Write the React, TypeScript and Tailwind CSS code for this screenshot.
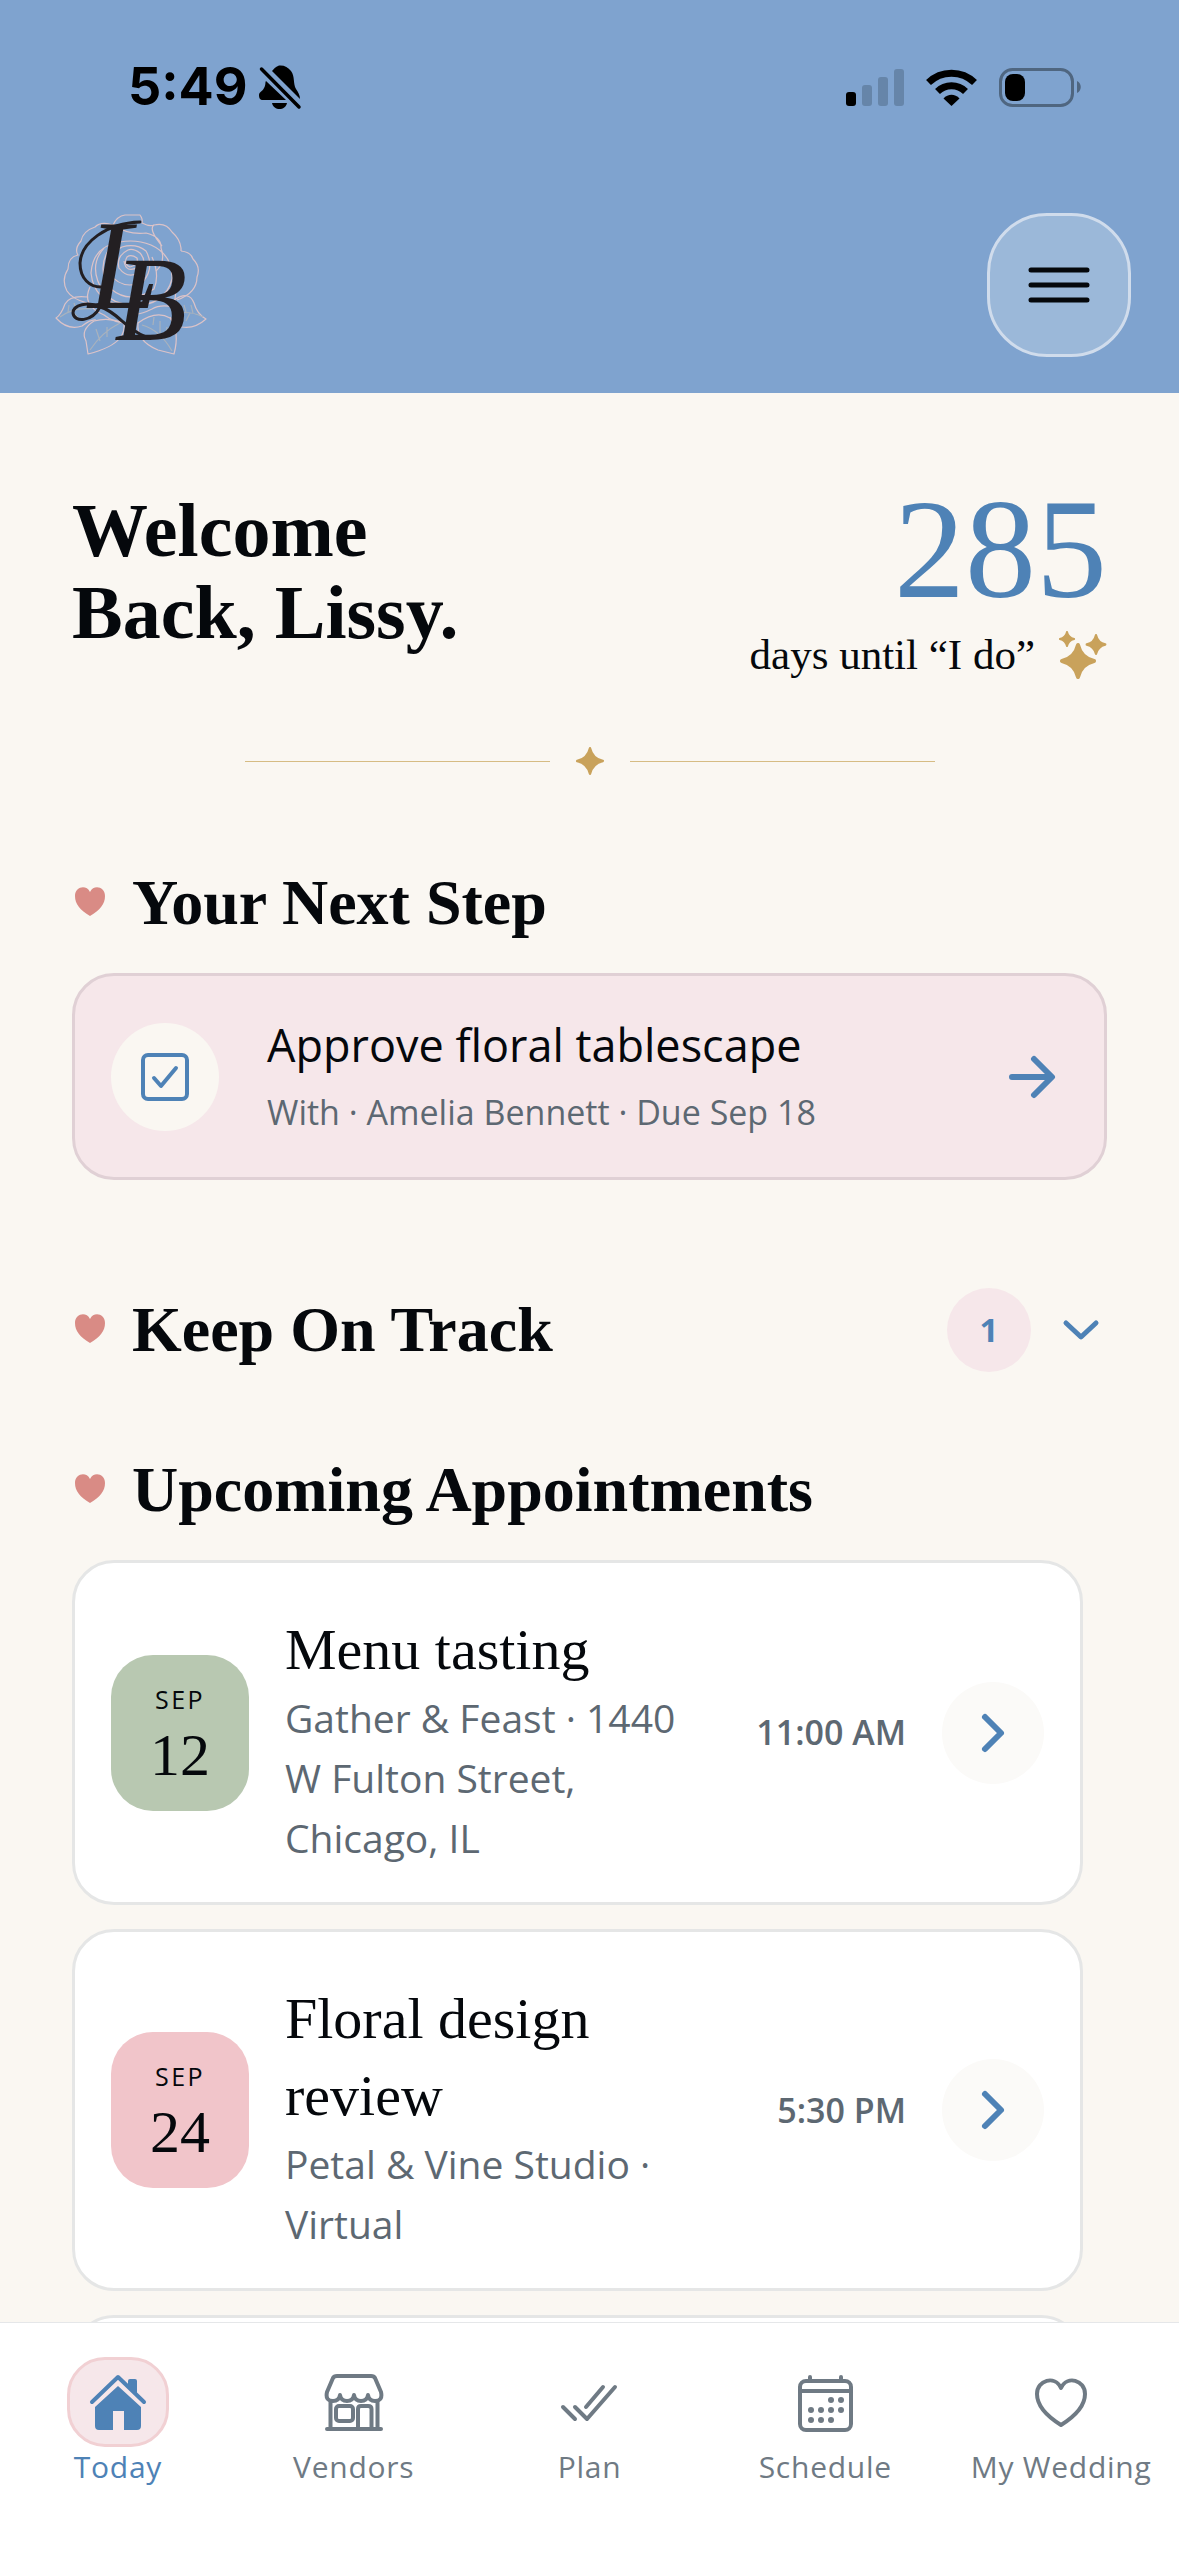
import React from 'react';

interface Appointment {
  month: string;
  day: number;
  title: string;
  place: string;
  time: string;
  tile: string;
}

const appointments: Appointment[] = [
  {
    month: 'SEP',
    day: 12,
    title: 'Menu tasting',
    place: 'Gather & Feast · 1440 W Fulton Street, Chicago, IL',
    time: '11:00 AM',
    tile: 'bg-[#b8c8b1]',
  },
  {
    month: 'SEP',
    day: 24,
    title: 'Floral design review',
    place: 'Petal & Vine Studio · Virtual',
    time: '5:30 PM',
    tile: 'bg-[#f1c5ca]',
  },
];

const StatusBar: React.FC = () => (
  <div className="flex h-[174px] items-center justify-between pl-32 pr-[98px]">
    <div className="flex items-center gap-2.5 text-black">
      <span className="font-['Inter',sans-serif] text-[52px] font-bold leading-none">5:49</span>
      <svg className="h-[46px] w-[44px]" viewBox="0 0 44 46" fill="currentColor" aria-label="Silent mode">
        <path d="M14 7 C16 5 17 3 21 1.500 C26 1 30 3 33 7 C37 12 35 20 38 25 C40 28 42 31 42 35 Z" />
        <path d="M8 17 L28 36 H5 C2 36 1 34 1 31 C1 28 5 27 6 24 C8 21 7 18 8 17 Z" />
        <path d="M14 39 H29 C28 43 25 45 21.500 45 C18 45 15 43 14 39 Z" />
        <path d="M3.500 5 L41 43" stroke="currentColor" strokeWidth="3.500" strokeLinecap="round" />
      </svg>
    </div>
    <div className="flex items-center gap-[22px]">
      <svg className="h-[37px] w-[58px]" viewBox="0 0 58 37" aria-label="Cellular signal">
        <rect x="0" y="23" width="10" height="14" rx="3" fill="#000" />
        <rect x="16" y="16" width="10" height="21" rx="3" fill="#6685a9" />
        <rect x="32" y="8" width="10" height="29" rx="3" fill="#6685a9" />
        <rect x="48" y="0" width="10" height="37" rx="3" fill="#6685a9" />
      </svg>
      <svg className="h-[37px] w-[51px]" viewBox="0 0 51 37" aria-label="Wi-Fi">
        <path d="M2.500 13.500 A33 33 0 0 1 48.500 13.500" fill="none" stroke="#000" strokeWidth="7" />
        <path d="M11.500 22.500 A20 20 0 0 1 39.500 22.500" fill="none" stroke="#000" strokeWidth="7" />
        <path d="M17.500 29.500 C22 24.500 29 24.500 33.500 29.500 L25.500 37 Z" fill="#000" />
      </svg>
      <svg className="h-[39px] w-[82px]" viewBox="0 0 82 39" aria-label="Battery">
        <rect x="1.500" y="1.500" width="72" height="36" rx="12" fill="none" stroke="#4f6680" strokeWidth="3" />
        <rect x="6" y="6" width="20" height="27" rx="8" fill="#000" />
        <path d="M78 13 C83 15 83 23 78 25 Z" fill="#4f6680" />
      </svg>
    </div>
  </div>
);

// Rose line art with the couple's initials over it
const Monogram: React.FC = () => (
  <svg className="h-[144px] w-[156px]" viewBox="0 0 156 144" role="img" aria-label="LB">
    <g fill="none" stroke="#dcc3c8" strokeWidth="1.200" strokeLinejoin="round">
      <path d="M59 12 Q63 3 71 2 L86 2 Q89 6 88 10 Q96 14 100 12 Q112 9 118 19 Q126 26 127 35 L127 38" />
      <path d="M59 12 Q47 8 41 14 Q29 18 27 28 Q20 36 24 42 Q14 44 14 56 Q7 67 13 78 Q18 86 33 90" />
      <path d="M127 38 Q137 39 139 46 Q147 54 143 64 Q143 80 123 87" />
      <path d="M59 12 Q74 22 92 20 Q108 24 107 35 Q112 49 102 58 M100 12 Q94 16 108 33" />
      <path d="M66 29 Q39 33 37 60 Q40 88 68 92 Q110 97 118 66 Q119 42 97 32 Q82 26 66 29 Z" />
      <path d="M50 35 Q33 54 50 80 Q68 100 102 84 M59 30 Q40 55 57 76 Q76 92 100 76 Q106 62 98 44" />
      <path d="M68 34 Q50 44 55 60 Q68 78 89 69 Q101 54 92 38 Q82 30 68 34 Z" />
      <path d="M74 37 Q62 43 65 55 Q74 67 86 59 Q94 49 86 40 Q79 35 74 37 Z" />
      <path d="M73 44 Q69 51 76 54 Q85 52 83 45 Q77 41 73 44 Z M70 48 Q72 61 84 54" />
      <path d="M36 74 Q27 92 50 102 Q61 111 78 110 M123 70 L120 94 Q106 91 98 96 Q88 101 82 101" />
      <path d="M33 84 Q16 82 11 91 Q7 102 2 105 Q14 118 28 113 Q37 106 42 107" />
      <path d="M120 87 Q135 77 140 90 Q143 101 152 106 Q141 116 128 114 Q121 112 116 104" />
      <path d="M40 108 Q26 117 32 128 L34 141 Q58 135 66 125 Q71 119 70 110 Q55 104 40 108 Z" />
      <path d="M84 110 Q82 128 104 137 L120 141 Q126 119 116 105 Q102 97 84 110 Z" />
      <path d="M36 137 Q48 119 66 110 M42 116 L46 128 M53 114 L53 124 M88 112 Q106 117 118 138 M99 112 L100 104 M106 120 L106 108 M112 126 L113 114" stroke="#a9b2bd" />
      <path d="M6 104 Q20 94 38 96 M14 99 L15 92 M22 96 L20 90 M18 98 L25 106 M149 104 Q138 98 122 100 M139 100 L137 92 M132 99 L130 92 M136 100 L132 108" stroke="#a9b2bd" />
    </g>
    <g fill="none" stroke="#231f22" strokeWidth="3" strokeLinecap="round">
      <path d="M86 9 C52 10 27 30 26 50 C26 66 36 74 47 74" />
      <path d="M46 94 C34 88 19 92 19 100 C20 110 38 109 46 94 C62 98 72 116 92 124" />
    </g>
    <g fill="#231f22" fontFamily="'Liberation Serif', serif" fontStyle="italic">
      <text x="34" y="95" fontSize="128">L</text>
      <text x="60" y="127" fontSize="120">B</text>
    </g>
  </svg>
);

const Header: React.FC = () => (
  <header className="bg-[#7fa3cf]">
    <StatusBar />
    <div className="flex items-center justify-between px-12 pb-9 pt-[39px]">
      <a href="#home" className="ml-1.5 block">
        <Monogram />
      </a>
      <button
        type="button"
        aria-label="Open menu"
        className="flex size-36 items-center justify-center rounded-[60px] border-3 border-[#d0dcec] bg-[#9bb8d9] text-[#05080c]"
      >
        <svg className="h-9 w-[62px]" viewBox="0 0 62 36" stroke="currentColor" strokeWidth="5" strokeLinecap="round">
          <path d="M3 3 H59 M3 18 H59 M3 33 H59" />
        </svg>
      </button>
    </div>
  </header>
);

// Four-pointed star centred on the origin, tips at 18 units with the stroke
const STAR = 'M0 -16 Q3 -3 16 0 Q3 3 0 16 Q-3 3 -16 0 Q-3 -3 0 -16 Z';

const Sparkles: React.FC = () => (
  <svg
    className="size-12 text-[#c9a25b]"
    viewBox="0 0 48 48"
    fill="currentColor"
    stroke="currentColor"
    strokeWidth="4"
    strokeLinejoin="round"
    aria-hidden="true"
  >
    <path d={STAR} transform="translate(19 30)" />
    <path d={STAR} transform="translate(8 8) scale(0.450)" />
    <path d={STAR} transform="translate(37 13.500) scale(0.580)" />
  </svg>
);

const Divider: React.FC = () => (
  <div className="mx-auto mt-15 flex w-2/3 items-center gap-6">
    <span className="h-px grow bg-[#d6bc84]" />
    <svg
      className="size-8 text-[#c9a25b]"
      viewBox="-20 -20 40 40"
      fill="currentColor"
      stroke="currentColor"
      strokeWidth="3"
      strokeLinejoin="round"
      aria-hidden="true"
    >
      <path d={STAR} />
    </svg>
    <span className="h-px grow bg-[#d6bc84]" />
  </div>
);

const SectionTitle: React.FC<{ children: React.ReactNode }> = ({ children }) => (
  <h2 className="flex items-center gap-6 font-['Liberation_Serif',serif] text-[64px] font-bold leading-[72px]">
    <svg className="size-9 shrink-0 text-[#d98b85]" viewBox="0 0 36 36" fill="currentColor" aria-hidden="true">
      <path d="M18 31 C8 25 3 19 3 11 C3 2 14 -1 18 7 C22 -1 33 2 33 11 C33 19 28 25 18 31 Z" />
    </svg>
    {children}
  </h2>
);

const NextStep: React.FC = () => (
  <a
    href="#task"
    className="mt-[34px] flex items-center rounded-[42px] border-3 border-[#e0d0d5] bg-[#f6e7ea] px-9 py-9"
  >
    <span className="flex size-[108px] shrink-0 items-center justify-center rounded-full bg-[#faf7f2] text-[#4e82b6]">
      <svg className="size-12" viewBox="0 0 48 48" fill="none" stroke="currentColor" strokeWidth="4" strokeLinecap="round" strokeLinejoin="round">
        <rect x="2" y="2" width="44" height="44" rx="5" />
        <path d="M13 25 L20 33 L35 15" />
      </svg>
    </span>
    <span className="ml-12 grow">
      <span className="block text-[45px] leading-[66px]">Approve floral tablescape</span>
      <span className="mt-1.5 block text-[34px] leading-[57px] text-[#5d6872]">With · Amelia Bennett · Due Sep 18</span>
    </span>
    <svg className="mr-3 size-12 shrink-0 text-[#4e82b6]" viewBox="0 0 48 48" fill="none" stroke="currentColor" strokeWidth="6" strokeLinecap="round" strokeLinejoin="round">
      <path d="M4 24 H43 M26 6 L44 24 L26 42" />
    </svg>
  </a>
);

const AppointmentCard: React.FC<{ item: Appointment }> = ({ item }) => (
  <article className="flex items-center gap-9 rounded-[42px] border-3 border-[#e5e6e6] bg-white px-9">
    <div className={`flex h-[156px] w-[138px] shrink-0 flex-col items-center justify-center rounded-[42px] ${item.tile}`}>
      <span className="text-[25px] leading-9 tracking-widest">{item.month}</span>
      <span className="mt-2 font-['Liberation_Serif',serif] text-[60px] leading-[60px]">{item.day}</span>
    </div>
    <div className="min-w-0 grow pb-[34px] pr-3 pt-12">
      <h3 className="font-['Liberation_Serif',serif] text-[58px] leading-[77px]">{item.title}</h3>
      <p className="text-[39px] leading-[60px] text-[#5d6872]">{item.place}</p>
    </div>
    <time className="shrink-0 text-[34px] font-semibold text-[#5d6872]">{item.time}</time>
    <button
      type="button"
      aria-label={`Open ${item.title}`}
      className="flex size-[102px] shrink-0 items-center justify-center rounded-full bg-[#fbfaf8] text-[#4e82b6]"
    >
      <svg className="size-12" viewBox="0 0 48 48" fill="none" stroke="currentColor" strokeWidth="6" strokeLinecap="round" strokeLinejoin="round">
        <path d="M16 8 L32 24 L16 40" />
      </svg>
    </button>
  </article>
);

const HomeIcon = () => (
  <svg className="size-15" viewBox="0 0 60 60" fill="currentColor">
    <path d="M30 14 L53 35 V54 Q53 58 49 58 H36 V39 H25 V58 H11 Q7 58 7 54 V35 Z" />
    <path d="M4 30 L30 5 L56 30" fill="none" stroke="currentColor" strokeWidth="4" strokeLinecap="round" strokeLinejoin="round" />
    <path d="M40 13 V9 Q40 7 42 7 H47 Q49 7 49 9 V22 Z" />
  </svg>
);

const VendorsIcon = () => (
  <svg className="size-15" viewBox="0 0 60 60" fill="none" stroke="currentColor" strokeWidth="4" strokeLinecap="round" strokeLinejoin="round">
    <path d="M13 4 H47 Q50 4 51 6 L57 20 Q59 29 51 29 Q45 29 44 23 Q43 29 37 29 Q31 29 30 23 Q29 29 23 29 Q17 29 16 23 Q15 29 9 29 Q1 29 3 20 L9 6 Q10 4 13 4 Z" />
    <path d="M3 57 H57 M6.500 30 V57 M53.500 30 V57" />
    <rect x="12" y="34" width="17" height="15" rx="3" />
    <path d="M34 57 V37 Q34 34 37 34 H44 Q47.500 34 47.500 37 V57" />
  </svg>
);

const PlanIcon = () => (
  <svg className="size-15" viewBox="0 0 60 60" fill="none" stroke="currentColor" strokeWidth="4" strokeLinecap="round" strokeLinejoin="round">
    <path d="M4 35 L16 47 M16 35 L28 47 L56 15 M27 35 L44 15" />
  </svg>
);

const DOTS = [
  [36, 28], [46, 28],
  [16, 38], [26, 38], [36, 38], [46, 38],
  [16, 48], [26, 48], [36, 48],
];

const ScheduleIcon = () => (
  <svg className="size-15" viewBox="0 0 60 60" fill="none" stroke="currentColor" strokeWidth="4" strokeLinecap="round">
    <rect x="5" y="9" width="51" height="49" rx="6" />
    <path d="M5 19 H56 M15 5 V9 M46 5 V9" />
    {DOTS.map(([cx, cy]) => (
      <circle key={`${cx}-${cy}`} cx={cx} cy={cy} r="3" fill="currentColor" stroke="none" />
    ))}
  </svg>
);

const WeddingIcon = () => (
  <svg className="size-15" viewBox="0 0 60 60" fill="none" stroke="currentColor" strokeWidth="4" strokeLinejoin="round">
    <path d="M30 53 C14 43 6 33 6 22 C6 8 24 3 30 16 C36 3 54 8 54 22 C54 33 46 43 30 53 Z" />
  </svg>
);

const tabs = [
  { label: 'Today', Icon: HomeIcon, active: true },
  { label: 'Vendors', Icon: VendorsIcon },
  { label: 'Plan', Icon: PlanIcon },
  { label: 'Schedule', Icon: ScheduleIcon },
  { label: 'My Wedding', Icon: WeddingIcon },
];

const BottomNav: React.FC = () => (
  <nav className="grid shrink-0 grid-cols-5 border-t border-[#e5e7e9] bg-white pb-[69px] pt-[34px]">
    {tabs.map(({ label, Icon, active }) => (
      <a
        key={label}
        href={`#${label}`}
        className={`flex flex-col items-center whitespace-nowrap text-[30px] leading-10 tracking-wide ${
          active ? 'text-[#4e82b6]' : 'text-[#6f7a84]'
        }`}
      >
        <span
          className={`flex h-[90px] w-[102px] items-center justify-center rounded-[38px] border-3 ${
            active ? 'border-[#f1d0d3] bg-[#f6e7ea]' : 'border-transparent'
          }`}
        >
          <Icon />
        </span>
        {label}
      </a>
    ))}
  </nav>
);

const App: React.FC = () => (
  <div className="flex h-screen flex-col overflow-hidden bg-[#faf7f2] font-['Open_Sans',sans-serif] text-[#05080c]">
    <Header />
    <main className="min-h-0 grow overflow-hidden px-[72px] pt-24">
      <section className="flex items-start justify-between">
        <h1 className="font-['Liberation_Serif',serif] text-[76px] font-bold leading-[82px]">
          Welcome
          <br />
          Back, Lissy.
        </h1>
        <div className="flex flex-col items-end font-['Liberation_Serif',serif]">
          <p className="text-[142px] leading-[120px] text-[#4e82b6]">285</p>
          <p className="mt-4 flex items-center gap-6 text-[43px] leading-[60px]">
            days until “I do”
            <Sparkles />
          </p>
        </div>
      </section>

      <Divider />

      <section className="mt-[90px]">
        <SectionTitle>Your Next Step</SectionTitle>
        <NextStep />
      </section>

      <section className="mt-[108px] flex items-center justify-between">
        <SectionTitle>Keep On Track</SectionTitle>
        <button type="button" aria-label="Show 1 item" className="flex items-center gap-6 text-[#4e82b6]">
          <span className="flex size-[84px] items-center justify-center rounded-full bg-[#f6e7ea] text-[33px] font-bold">1</span>
          <svg className="size-13" viewBox="0 0 52 52" fill="none" stroke="currentColor" strokeWidth="5" strokeLinecap="round" strokeLinejoin="round">
            <path d="M11 19 L26 33 L41 19" />
          </svg>
        </button>
      </section>

      <section className="mt-[82px]">
        <SectionTitle>Upcoming Appointments</SectionTitle>
        <div className="mr-6 mt-[34px] flex flex-col gap-6">
          {appointments.map((item) => (
            <AppointmentCard key={item.title} item={item} />
          ))}
          {/* top edge of the next card, tucked under the nav */}
          <div className="h-40 rounded-[42px] border-3 border-[#e5e6e6] bg-white" />
        </div>
      </section>
    </main>
    <BottomNav />
  </div>
);

export default App;
